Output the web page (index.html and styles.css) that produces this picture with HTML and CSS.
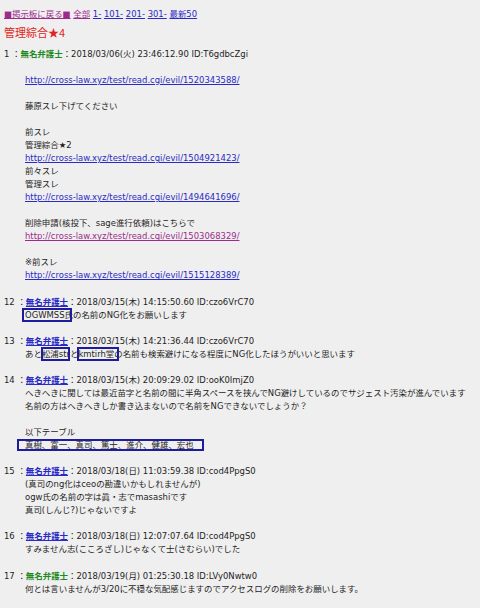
FILE: index.html
```html
<!DOCTYPE html>
<html lang="ja">
<head>
<meta charset="utf-8">
<title>管理綜合★4</title>
<link rel="stylesheet" href="styles.css">
</head>
<body>
<div class="nav"><a class="visited" href="#">■掲示板に戻る■</a> <a class="visited" href="#">全部</a> <a href="#">1-</a> <a href="#">101-</a> <a href="#">201-</a> <a href="#">301-</a> <a href="#">最新50</a></div>
<h1 class="title">管理綜合★4</h1>
<dl class="thread">
<dt>1 ：<b class="name-green">無名弁護士</b>：2018/03/06(火) 23:46:12.90 ID:T6gdbcZgi</dt>
<dd><br><a href="#">http://cross-law.xyz/test/read.cgi/evil/1520343588/</a><br><br>藤原スレ下げてください<br><br>前スレ<br>管理綜合★2<br><a href="#">http://cross-law.xyz/test/read.cgi/evil/1504921423/</a><br>前々スレ<br>管理スレ<br><a href="#">http://cross-law.xyz/test/read.cgi/evil/1494641696/</a><br><br>削除申請(核投下、sage進行依頼)はこちらで<br><a class="visited" href="#">http://cross-law.xyz/test/read.cgi/evil/1503068329/</a><br><br>※前スレ<br><a href="#">http://cross-law.xyz/test/read.cgi/evil/1515128389/</a></dd>

<dt>12 ：<a class="name-link" href="#"><b>無名弁護士</b></a>：2018/03/15(木) 14:15:50.60 ID:czo6VrC70</dt>
<dd><span class="mark mark-a">OGWMSS氏</span>の名前のNG化をお願いします</dd>

<dt>13 ：<a class="name-link" href="#"><b>無名弁護士</b></a>：2018/03/15(木) 14:21:36.44 ID:czo6VrC70</dt>
<dd>あと<span class="mark mark-b">松浦str</span>と<span class="mark mark-c">kmtirh堂</span>の名前も検索避けになる程度にNG化したほうがいいと思います</dd>

<dt>14 ：<a class="name-link" href="#"><b>無名弁護士</b></a>：2018/03/15(木) 20:09:29.02 ID:ooK0ImjZ0</dt>
<dd>へきへきに関しては最近苗字と名前の間に半角スペースを挟んでNG避けしているのでサジェスト汚染が進んでいます<br>名前の方はへきへきしか書き込まないので名前をNGできないでしょうか？<br><br>以下テーブル<br><span class="mark mark-d">真樹、富一、真司、篤士、進介、健雄、宏也</span></dd>

<dt>15 ：<a class="name-link" href="#"><b>無名弁護士</b></a>：2018/03/18(日) 11:03:59.38 ID:cod4PpgS0</dt>
<dd>(真司のng化はceoの勘違いかもしれませんが)<br>ogw氏の名前の字は眞・志でmasashiです<br>真司(しんじ?)じゃないですよ</dd>

<dt>16 ：<a class="name-link" href="#"><b>無名弁護士</b></a>：2018/03/18(日) 12:07:07.64 ID:cod4PpgS0</dt>
<dd>すみません志(こころざし)じゃなくて士(さむらい)でした</dd>

<dt>17 ：<b class="name-green">無名弁護士</b>：2018/03/19(月) 01:25:30.18 ID:LVy0Nwtw0</dt>
<dd>何とは言いませんが3/20に不穏な気配感じますのでアクセスログの削除をお願いします。</dd>
</dl>
</body>
</html>
```

FILE: styles.css
```css
html {
  background: #efefef;
}

body {
  margin: 0;
  padding: 8px 4px 0 4px;
  background: #efefef;
  color: #1e1e1e;
  font-family: "DejaVu Sans", "Noto Sans CJK JP", sans-serif;
  font-size: 8.45px;
  line-height: 13.05px;
}

a {
  color: #2a2ac4;
  text-decoration: underline;
}

a.visited {
  color: #9c2c8c;
}

.nav {
  white-space: nowrap;
}

.title {
  margin: 4px 0 7.6px;
  font-family: "Noto Sans CJK JP", "DejaVu Sans", sans-serif;
  font-size: 11px;
  line-height: 15px;
  font-weight: normal;
  color: #e02424;
}

.thread {
  margin: 0;
}

.thread dt {
  margin: 0;
  white-space: nowrap;
}

.thread dd {
  margin: 0 0 13.05px 21px;
  white-space: nowrap;
}

.name-green {
  color: #1f8a1f;
  font-weight: bold;
}

.name-link b {
  font-weight: bold;
}

.mark {
  position: relative;
}

.mark::after {
  content: "";
  position: absolute;
  top: -2px;
  bottom: -2px;
  left: -2px;
  right: -2px;
  border: 2px solid #1c1c9c;
}

.mark-a::after {
  left: -3px;
  right: 1px;
}

.mark-b::after {
  left: -1px;
  right: 0;
}

.mark-c::after {
  left: -1px;
  right: -5px;
}

.mark-d::after {
  top: -1px;
  bottom: -1px;
  left: -8px;
  right: -10px;
}
```
